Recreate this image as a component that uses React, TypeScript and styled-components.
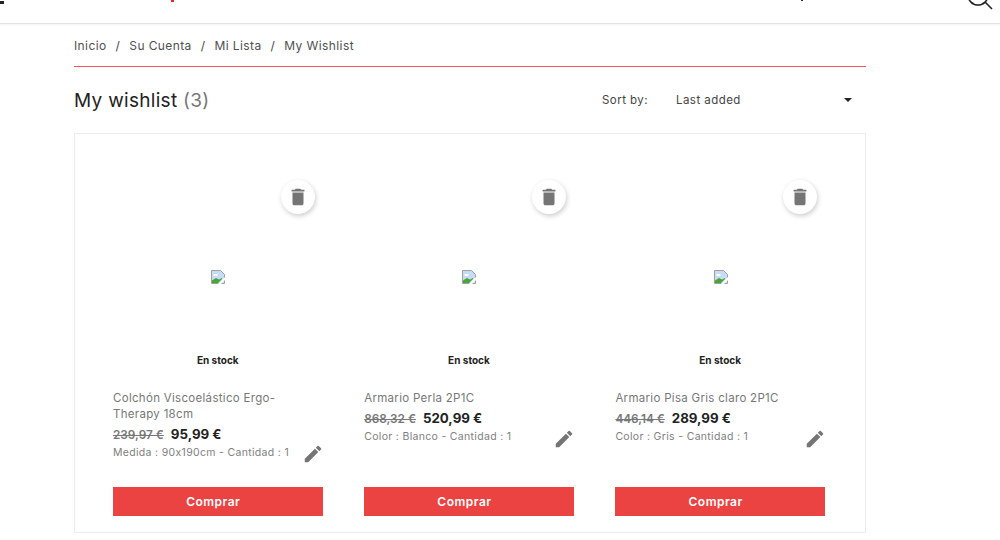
import styled, { createGlobalStyle } from "styled-components";

const GlobalStyle = createGlobalStyle`
  html, body {
    margin: 0;
    padding: 0;
    background: #fff;
    font-family: Inter, "Open Sans", sans-serif;
    overflow: hidden;
  }
`;

const Header = styled.header`
  height: 23px;
  border-bottom: 1px solid #e4e4e4;
  box-shadow: 0 1px 2px rgba(0, 0, 0, 0.05);
  overflow: hidden;
  display: flex;
  align-items: flex-start;
`;

const HeaderDot = styled.span`
  width: 4px;
  height: 3px;
  margin-top: 1px;
  background: #222;
`;

const LogoTail = styled.span`
  width: 3px;
  height: 2px;
  margin-left: 167px;
  background: #e8262c;
`;

const PhoneTail = styled.span`
  width: 2px;
  height: 1px;
  margin-left: 627px;
  background: #333;
`;

const SearchIcon = styled.svg`
  width: 28px;
  height: 28px;
  margin-left: 163px;
  margin-top: -17px;
  flex: none;
`;

const Main = styled.main`
  width: 792px;
  margin-left: 74px;
`;

const Breadcrumb = styled.nav`
  height: 42px;
  border-bottom: 1px solid #f0595b;
  display: flex;
  align-items: center;
  font-size: 12px;
  letter-spacing: 0.4px;
  color: #505050;
`;

const Separator = styled.span`
  margin: 0 9px;
  color: #444;
`;

const TitleRow = styled.div`
  height: 66px;
  display: flex;
  align-items: center;
`;

const Title = styled.h1`
  flex: 1;
  margin: 0;
  font-size: 19px;
  font-weight: 400;
  letter-spacing: 0.3px;
  color: #222;
`;

const Count = styled.span`
  color: #777;
`;

const SortLabel = styled.span`
  width: 74px;
  font-size: 11.5px;
  letter-spacing: 0.45px;
  color: #444;
`;

const SortSelect = styled.div`
  width: 190px;
  box-sizing: border-box;
  padding-right: 14px;
  display: flex;
  justify-content: space-between;
  align-items: center;
  font-size: 11.5px;
  letter-spacing: 0.45px;
  color: #444;
`;

const Caret = styled.span`
  width: 0;
  height: 0;
  border-left: 4.5px solid transparent;
  border-right: 4.5px solid transparent;
  border-top: 4px solid #222;
`;

const Grid = styled.section`
  height: 400px;
  box-sizing: border-box;
  border: 1px solid #ececec;
  padding: 0 0 0 38px;
  display: grid;
  grid-template-columns: repeat(3, 251.2px);
`;

const Item = styled.article`
  position: relative;
  width: 209.5px;
  display: flex;
  flex-direction: column;
`;

const RoundButton = styled.button`
  position: absolute;
  top: 46px;
  right: 8px;
  width: 34px;
  height: 34px;
  padding: 0;
  border: none;
  border-radius: 50%;
  background: #fff;
  box-shadow: 1px 2px 5px rgba(0, 0, 0, 0.2);
  display: flex;
  align-items: center;
  justify-content: center;
`;

const ImageSlot = styled.div`
  height: 218px;
  padding-top: 136px;
  box-sizing: border-box;
  display: flex;
  justify-content: center;
`;

const BrokenImage = styled.svg`
  width: 14px;
  height: 14px;
  margin-left: 1px;
`;

const Stock = styled.div`
  height: 18px;
  text-align: center;
  font-size: 10px;
  font-weight: 700;
  line-height: 16px;
  color: #222;
`;

const Details = styled.div`
  position: relative;
  height: 97px;
  margin-top: 20px;
`;

const Name = styled.h2`
  margin: 0;
  padding-right: 20px;
  font-size: 11.5px;
  font-weight: 400;
  line-height: 16px;
  letter-spacing: 0.3px;
  color: #777;
`;

const PriceRow = styled.div`
  display: flex;
  align-items: baseline;
  gap: 7px;
  height: 21px;
  margin-top: 2px;
  line-height: 21px;
`;

const OldPrice = styled.s`
  font-size: 11.8px;
  font-weight: 600;
  color: #777;
`;

const NewPrice = styled.span`
  font-size: 13.3px;
  font-weight: 700;
  color: #222;
`;

const Options = styled.div`
  font-size: 10.5px;
  line-height: 15px;
  letter-spacing: 0.32px;
  color: #808080;
`;

const EditButton = styled.span<{ $top: number }>`
  position: absolute;
  top: ${(p) => p.$top}px;
  right: -1px;
  width: 22px;
  height: 22px;
`;

const BuyButton = styled.button`
  height: 29px;
  padding: 0 9px 0 0;
  border: none;
  background: #eb4242;
  color: #fff;
  font-family: inherit;
  font-size: 12px;
  font-weight: 600;
  letter-spacing: 0.5px;
`;

const products = [
  {
    name: "Colchón Viscoelástico Ergo-Therapy 18cm",
    oldPrice: "239,97 €",
    price: "95,99 €",
    options: "Medida : 90x190cm - Cantidad : 1",
    editTop: 53,
  },
  {
    name: "Armario Perla 2P1C",
    oldPrice: "868,32 €",
    price: "520,99 €",
    options: "Color : Blanco - Cantidad : 1",
    editTop: 38,
  },
  {
    name: "Armario Pisa Gris claro 2P1C",
    oldPrice: "446,14 €",
    price: "289,99 €",
    options: "Color : Gris - Cantidad : 1",
    editTop: 38,
  },
];

const TrashIcon = () => (
  <svg width="22" height="22" viewBox="0 0 24 24" fill="#757575">
    <path d="M6 19c0 1.1.9 2 2 2h8c1.1 0 2-.9 2-2V7H6v12zM19 4h-3.5l-1-1h-5l-1 1H5v2h14V4z" />
  </svg>
);

const PencilIcon = () => (
  <svg width="22" height="22" viewBox="0 0 24 24" fill="#757575">
    <path d="M3 17.25V21h3.75L17.81 9.94l-3.75-3.75L3 17.25zM20.71 7.04a1 1 0 0 0 0-1.41l-2.34-2.34a1 1 0 0 0-1.41 0l-1.83 1.83 3.75 3.75 1.83-1.83z" />
  </svg>
);

const App = () => (
  <>
    <GlobalStyle />
    <Header>
      <HeaderDot />
      <LogoTail />
      <PhoneTail />
      <SearchIcon viewBox="0 0 28 28" fill="none" stroke="#222" strokeWidth="1.6">
        <circle cx="12" cy="12" r="10" />
        <path d="M19 19l7 7" />
      </SearchIcon>
    </Header>
    <Main>
      <Breadcrumb>
        Inicio<Separator>/</Separator>Su Cuenta<Separator>/</Separator>Mi Lista<Separator>/</Separator>My Wishlist
      </Breadcrumb>
      <TitleRow>
        <Title>
          My wishlist <Count>(3)</Count>
        </Title>
        <SortLabel>Sort by:</SortLabel>
        <SortSelect>
          Last added
          <Caret />
        </SortSelect>
      </TitleRow>
      <Grid>
        {products.map((product) => (
          <Item key={product.name}>
            <RoundButton>
              <TrashIcon />
            </RoundButton>
            <ImageSlot>
              <BrokenImage viewBox="0 0 14 14">
                <path d="M.5.5h9l4 4v9H.5z" fill="#c6dcf6" stroke="#a0a0a0" />
                <path d="M2.5 4h4v2h-4z" fill="#fff" />
                <path d="M1 13V10.5L5 8l3 1.5L11 8v1l-4 4z" fill="#4aa536" />
                <path d="M7 14l7-7v3l-4 4z" fill="#fff" />
              </BrokenImage>
            </ImageSlot>
            <Stock>En stock</Stock>
            <Details>
              <Name>{product.name}</Name>
              <PriceRow>
                <OldPrice>{product.oldPrice}</OldPrice>
                <NewPrice>{product.price}</NewPrice>
              </PriceRow>
              <Options>{product.options}</Options>
              <EditButton $top={product.editTop}>
                <PencilIcon />
              </EditButton>
            </Details>
            <BuyButton>Comprar</BuyButton>
          </Item>
        ))}
      </Grid>
    </Main>
  </>
);

export default App;
